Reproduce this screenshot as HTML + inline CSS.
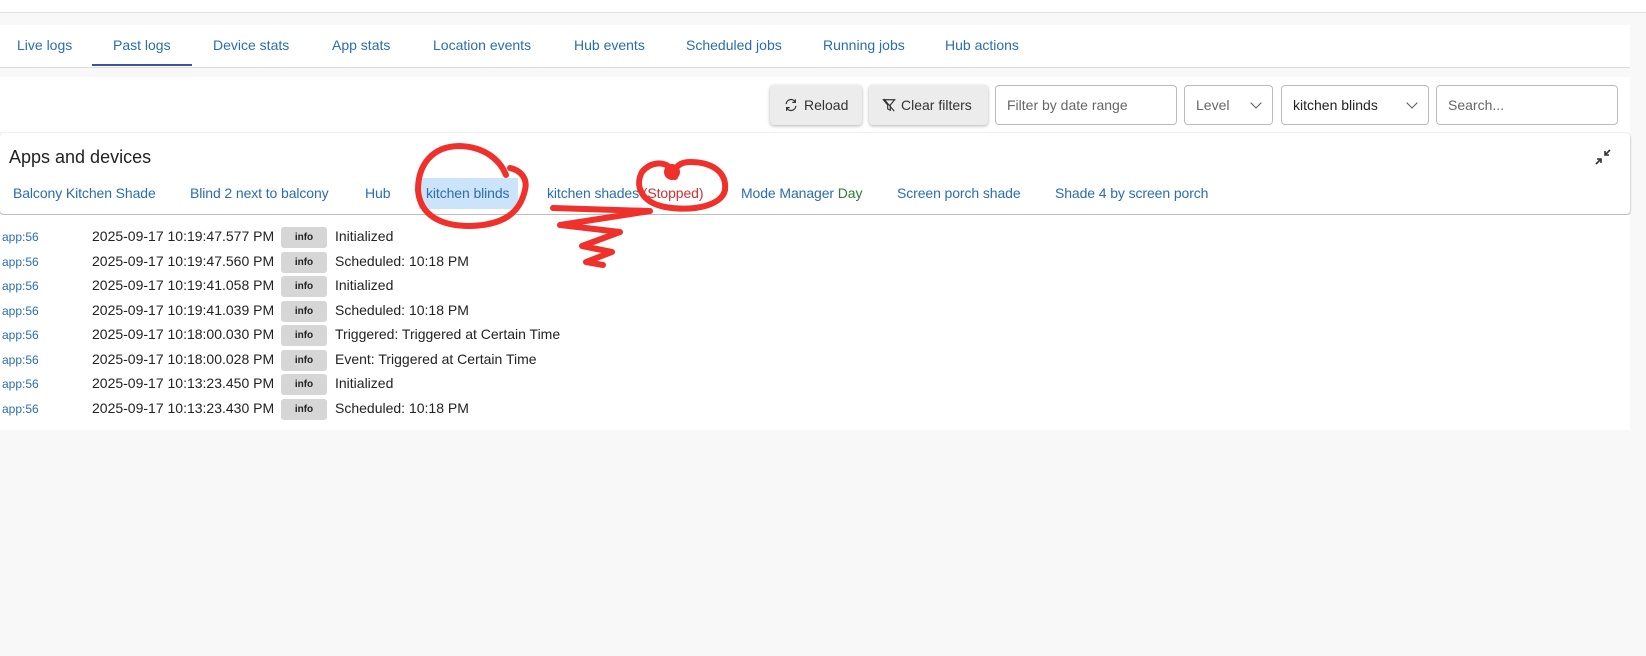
<!DOCTYPE html>
<html><head><meta charset="utf-8"><style>
body{margin:0;width:1646px;height:656px;background:#f8f8f8;font-family:"Liberation Sans",sans-serif;position:relative;overflow:hidden}
.a{position:absolute;white-space:nowrap}
.tab{position:absolute;top:37px;font-size:14px;color:#2a6db0}
.lnk{position:absolute;top:185px;font-size:14px;color:#2a6db0;letter-spacing:-0.1px}
.btn{position:absolute;top:85px;height:40px;background:#ececec;border-radius:4px;box-shadow:0 1px 3px rgba(0,0,0,.3);font-size:14px;color:#333;line-height:40px;box-sizing:border-box}
.inp{position:absolute;top:85px;height:40px;border:1px solid #bbb;border-radius:4px;background:#fff;font-size:14px;color:#666;line-height:38px;box-sizing:border-box;padding-left:11px}
.row{position:absolute;left:0;height:24px;font-size:14px;color:#222;width:700px}
.row .ap{position:absolute;left:2px;top:5px;font-size:12px;color:#2a6db0}
.row .d{position:absolute;left:92px;top:3px}
.row .b{position:absolute;left:281px;top:2px;width:46px;height:21px;background:#d6d6d6;border-radius:3px;font-size:10px;font-weight:bold;text-align:center;line-height:22px;color:#222}
.row .m{position:absolute;left:335px;top:3px}
.chev{position:absolute;right:12px;top:13px;width:7px;height:7px;border-right:1.5px solid #555;border-bottom:1.5px solid #555;transform:rotate(45deg)}
</style></head><body>
<div class="a" style="left:0;top:0;width:1646px;height:12px;background:#fff;border-bottom:1px solid #e2e2e2"></div>
<div class="a" style="left:0;top:25px;width:1630px;height:42px;background:#fff;border-bottom:1px solid #ddd"></div>
<div class="tab" style="left:17px">Live logs</div>
<div class="tab" style="left:113px">Past logs</div>
<div class="a" style="left:92px;top:64px;width:100px;height:2px;background:#3f51a5"></div>
<div class="tab" style="left:213px">Device stats</div>
<div class="tab" style="left:332px">App stats</div>
<div class="tab" style="left:433px">Location events</div>
<div class="tab" style="left:574px">Hub events</div>
<div class="tab" style="left:686px">Scheduled jobs</div>
<div class="tab" style="left:823px">Running jobs</div>
<div class="tab" style="left:945px">Hub actions</div>
<div class="a" style="left:0;top:77px;width:1630px;height:55px;background:#fff"></div>
<div class="btn" style="left:770px;width:92px;padding-left:14px"><svg width="14" height="14" viewBox="0 0 16 16" style="vertical-align:-2px;margin-right:6px" fill="none" stroke="#333" stroke-width="1.4"><path d="M2.5 7A5.5 5.5 0 0 1 13 5M13 1.5V5H9.5M13.5 9A5.5 5.5 0 0 1 3 11M3 14.5V11h3.5"/></svg>Reload</div>
<div class="btn" style="left:869px;width:119px;padding-left:13px"><svg width="14" height="14" viewBox="0 0 16 16" style="vertical-align:-2px;margin-right:5px" fill="none" stroke="#333" stroke-width="1.3"><path d="M1.5 2h13l-5 6v6l-3-1.5V8z M2 1l12 14"/></svg>Clear filters</div>
<div class="inp" style="left:995px;width:182px">Filter by date range</div>
<div class="inp" style="left:1184px;width:89px">Level<span class="chev"></span></div>
<div class="inp" style="left:1281px;width:148px;color:#222">kitchen blinds<span class="chev"></span></div>
<div class="inp" style="left:1436px;width:182px">Search...</div>
<div class="a" style="left:0;top:133px;width:1630px;height:81px;background:#fff;border-radius:4px;box-shadow:0 1px 2px rgba(0,0,0,.35)"></div>
<div class="a" style="left:9px;top:147px;font-size:18px;color:#222">Apps and devices</div>
<svg class="a" style="left:1594px;top:148px" width="18" height="18" viewBox="0 0 18 18" fill="none" stroke="#333" stroke-width="1.6"><path d="M16 2l-5 5M11 3v4h4M2 16l5-5M3 11h4v4"/></svg>
<div class="a" style="left:419px;top:178px;width:99px;height:31px;background:#cce4fa"></div>
<div class="lnk" style="left:13px">Balcony Kitchen Shade</div>
<div class="lnk" style="left:190px">Blind 2 next to balcony</div>
<div class="lnk" style="left:365px">Hub</div>
<div class="lnk" style="left:426px">kitchen blinds</div>
<div class="lnk" style="left:547px">kitchen shades <span style="color:#d32f2f">(Stopped)</span></div>
<div class="lnk" style="left:741px">Mode Manager <span style="color:#2e7d32">Day</span></div>
<div class="lnk" style="left:897px">Screen porch shade</div>
<div class="lnk" style="left:1055px">Shade 4 by screen porch</div>
<div class="a" style="left:0;top:215px;width:1630px;height:215px;background:#fff"></div>
<div class="row" style="top:225px"><span class="ap">app:56</span><span class="d">2025-09-17 10:19:47.577 PM</span><span class="b">info</span><span class="m">Initialized</span></div>
<div class="row" style="top:250px"><span class="ap">app:56</span><span class="d">2025-09-17 10:19:47.560 PM</span><span class="b">info</span><span class="m">Scheduled: 10:18 PM</span></div>
<div class="row" style="top:274px"><span class="ap">app:56</span><span class="d">2025-09-17 10:19:41.058 PM</span><span class="b">info</span><span class="m">Initialized</span></div>
<div class="row" style="top:299px"><span class="ap">app:56</span><span class="d">2025-09-17 10:19:41.039 PM</span><span class="b">info</span><span class="m">Scheduled: 10:18 PM</span></div>
<div class="row" style="top:323px"><span class="ap">app:56</span><span class="d">2025-09-17 10:18:00.030 PM</span><span class="b">info</span><span class="m">Triggered: Triggered at Certain Time</span></div>
<div class="row" style="top:348px"><span class="ap">app:56</span><span class="d">2025-09-17 10:18:00.028 PM</span><span class="b">info</span><span class="m">Event: Triggered at Certain Time</span></div>
<div class="row" style="top:372px"><span class="ap">app:56</span><span class="d">2025-09-17 10:13:23.450 PM</span><span class="b">info</span><span class="m">Initialized</span></div>
<div class="row" style="top:397px"><span class="ap">app:56</span><span class="d">2025-09-17 10:13:23.430 PM</span><span class="b">info</span><span class="m">Scheduled: 10:18 PM</span></div>
<svg class="a" style="left:0;top:0" width="1646" height="656" fill="none" stroke="#f0302a" stroke-width="6" stroke-linecap="round" stroke-linejoin="round">
<path d="M506 175C500 160 485 147 460 146C432 146 418 165 418 190C420 215 440 226 470 226C505 225 520 212 525 190C528 178 520 170 510 168"/>
<path d="M672 170C665 160 650 162 642 172C635 185 640 202 665 207C695 212 722 205 725 190C727 172 712 162 690 162C678 162 672 170 675 177"/>
<circle cx="672" cy="172" r="5" fill="#f0302a"/>
<path d="M553 208L650 211L560 225L620 232L582 246L612 252L586 262L603 265"/>
</svg>
</body></html>
